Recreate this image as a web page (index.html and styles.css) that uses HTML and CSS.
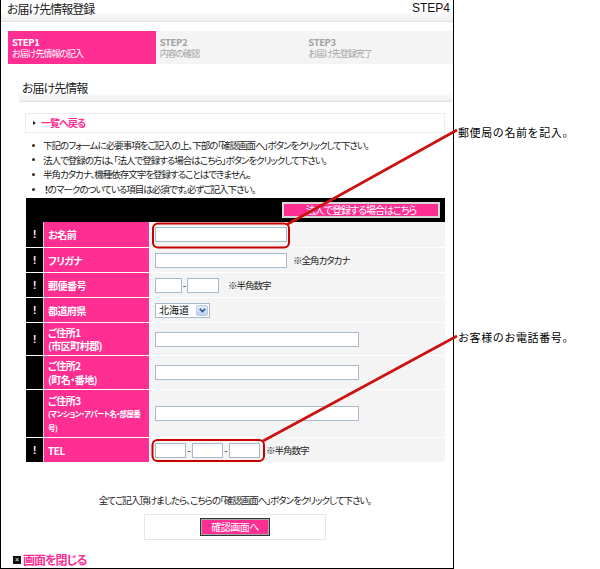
FILE: index.html
```html
<!DOCTYPE html>
<html lang="ja">
<head>
<meta charset="utf-8">
<title>お届け先情報登録</title>
<link rel="stylesheet" href="styles.css">
</head>
<body>
<div class="page">
  <div class="frame">
    <header class="titlebar">
      <h1>お届け先情報登録</h1>
      <span class="step4">STEP4</span>
    </header>

    <ol class="steps">
      <li class="step active"><b>STEP1</b><span>お届け先情報の記入</span></li>
      <li class="step"><b>STEP2</b><span>内容の確認</span></li>
      <li class="step"><b>STEP3</b><span>お届け先登録完了</span></li>
    </ol>

    <section class="content">
      <h2>お届け先情報</h2>
      <div class="body">
        <div class="backbox"><span class="tri"></span><a class="back">一覧へ戻る</a></div>
        <ul class="notes">
          <li>下記のフォームに必要事項をご記入の上、下部の「確認画面へ」ボタンをクリックして下さい。</li>
          <li>法人で登録の方は、「法人で登録する場合はこちら」ボタンをクリックして下さい。</li>
          <li>半角カタカナ、機種依存文字を登録することはできません。</li>
          <li><b class="bang">！</b>のマークのついている項目は必須です。必ずご記入下さい。</li>
        </ul>

        <div class="formhead"><button class="corp">法人で登録する場合はこちら</button></div>

        <div class="form">
          <div class="row h26">
            <div class="mark">!</div><div class="label">お名前</div>
            <div class="value"><input class="w132" type="text"></div>
          </div>
          <div class="row h25">
            <div class="mark">!</div><div class="label">フリガナ</div>
            <div class="value"><input class="w132" type="text"><span class="hint h6">※全角カタカナ</span></div>
          </div>
          <div class="row h25">
            <div class="mark">!</div><div class="label">郵便番号</div>
            <div class="value"><input class="w27" type="text"><span class="dash d5">-</span><input class="w32" type="text"><span class="hint h9">※半角数字</span></div>
          </div>
          <div class="row h25">
            <div class="mark">!</div><div class="label">都道府県</div>
            <div class="value">
              <span class="select"><span class="select-val">北海道</span><span class="select-btn"><svg width="7" height="5" viewBox="0 0 7 5"><path d="M0.8 0.8 L3.5 3.6 L6.2 0.8" fill="none" stroke="#2b4f8a" stroke-width="1.5"/></svg></span></span>
            </div>
          </div>
          <div class="row h33">
            <div class="mark">!</div><div class="label"><span>ご住所1</span><span>(市区町村郡)</span></div>
            <div class="value"><input class="w204" type="text"></div>
          </div>
          <div class="row h34">
            <div class="mark"></div><div class="label"><span>ご住所2</span><span>(町名・番地)</span></div>
            <div class="value"><input class="w204" type="text"></div>
          </div>
          <div class="row h48">
            <div class="mark"></div><div class="label"><span>ご住所3</span><small>(マンション・アパート名・部屋番</small><small>号)</small></div>
            <div class="value"><input class="w204" type="text"></div>
          </div>
          <div class="row h25">
            <div class="mark">!</div><div class="label">TEL</div>
            <div class="value"><input class="w31" type="text"><span class="dash d6">-</span><input class="w31" type="text"><span class="dash d6">-</span><input class="w31" type="text"><span class="hint h6">※半角数字</span></div>
          </div>
        </div>

        <p class="confirm-note">全てご記入頂けましたら、こちらの「確認画面へ」ボタンをクリックして下さい。</p>
        <div class="confirm-box"><button class="confirm">確認画面へ</button></div>
      </div>
    </section>

    <div class="close"><span class="close-icon">×</span><a class="close-link">画面を閉じる</a></div>
  </div>

  <svg class="overlay" width="600" height="569" viewBox="0 0 600 569">
    <rect x="153" y="223.5" width="136" height="24" rx="5" fill="none" stroke="#c80000" stroke-width="2"/>
    <rect x="152.5" y="440" width="111.5" height="21" rx="5" fill="none" stroke="#c80000" stroke-width="2"/>
    <line x1="287" y1="224.5" x2="457" y2="130" stroke="#cc1111" stroke-width="2.6"/>
    <line x1="263" y1="441" x2="457" y2="336" stroke="#cc1111" stroke-width="2.6"/>
  </svg>
  <div class="annot a1">郵便局の名前を記入。</div>
  <div class="annot a2">お客様のお電話番号。</div>
</div>
</body>
</html>
```
FILE: styles.css
```css
* { box-sizing: border-box; margin: 0; padding: 0; }

body {
  margin: 0;
  background: #fff;
  color: #222;
  font-family: "Noto Sans CJK JP", "Noto Sans", sans-serif;
  font-size: 10px;
  font-feature-settings: "palt";
  letter-spacing: -1px;
}

.page { position: relative; width: 600px; height: 569px; }

.frame {
  width: 454px;
  height: 569px;
  border-left: 1px solid #000;
  border-right: 1px solid #000;
  border-bottom: 1px solid #000;
}

/* title */
.titlebar {
  height: 22px;
  display: flex;
  justify-content: space-between;
  align-items: flex-start;
  padding: 2px 3px 0 6px;
  background: linear-gradient(#fff 0, #fff 13px, #fbfbfb 13px, #efefef 21px);
  border-bottom: 1px solid #e2e2e2;
}
.titlebar h1 { font-size: 12px; font-weight: normal; line-height: 13px; color: #222; }
.step4 { font-family: "Liberation Sans", Arial, sans-serif; font-size: 12px; line-height: 13px; color: #111; letter-spacing: 0; }

/* steps */
.steps {
  display: flex;
  list-style: none;
  margin: 9px 0 0 7px;
  height: 33px;
  background: #f4f4f4;
}
.step { width: 150px; padding: 5px 4px 0; color: #a3a3a3; font-size: 9px; }
.step b { display: block; font-size: 9.5px; line-height: 12px; letter-spacing: -0.4px; }
.step span { display: block; line-height: 12px; }
.step.active { width: 149px; background: #ff2e93; color: #fff; }

/* content */
.content { padding: 0 1px 0 18px; }
.content h2 {
  margin-top: 18px;
  height: 20px;
  padding-left: 3px;
  font-size: 12px;
  font-weight: normal;
  line-height: 12px;
  color: #222;
  background: linear-gradient(#fff 0, #fff 12px, #fafafa 12px, #f0f0f0 19px);
  border-bottom: 1px solid #e2e2e2;
}
.body { margin: 0 7px 0 6px; }

.backbox {
  margin-top: 11px;
  height: 20px;
  border: 1px solid #ececec;
  display: flex;
  align-items: center;
  padding-left: 7px;
}
.tri {
  width: 0; height: 0;
  border-left: 3px solid #222;
  border-top: 2px solid transparent;
  border-bottom: 2px solid transparent;
  margin-right: 5px;
}
.back { color: #ff2e93; font-weight: bold; font-size: 10px; line-height: 12px; }

.notes { list-style: none; margin-top: 5px; }
.notes li { display: flex; align-items: center; line-height: 14.6px; font-size: 9.5px; }
.notes li::before {
  content: "";
  width: 3px; height: 3px;
  border-radius: 50%;
  background: #3a2a1a;
  margin: 0 8px 0 7px;
  flex: none;
}
.bang { font-weight: bold; margin-left: 1px; }

/* black bar */
.formhead {
  margin: 2px 0 0 1px;
  height: 24px;
  background: #000;
  display: flex;
  justify-content: flex-end;
  align-items: center;
  padding-right: 5px;
}
.corp {
  width: 158px;
  height: 16px;
  background: #ff2e93;
  border: 2px solid #d8d8d8;
  color: #fff;
  font-family: inherit;
  font-size: 10px;
  line-height: 12px;
  letter-spacing: -1px;
  font-feature-settings: "palt";
}

/* form rows */
.form { margin-left: 1px; }
.row {
  display: grid;
  grid-template-columns: 18px 106px 1fr;
  border-bottom: 1px solid #fff;
}
.h25 { height: 25px; }
.h26 { height: 26px; }
.h33 { height: 33px; }
.h34 { height: 34px; }
.h48 { height: 48px; }

.mark {
  background: #000;
  border-right: 1px solid #d0d0d0;
  color: #fff;
  font-weight: bold;
  font-family: "Liberation Sans", sans-serif;
  font-size: 10px;
  letter-spacing: 0;
  display: flex;
  align-items: center;
  padding-left: 7px;
}
.label {
  background: #ff2e93;
  border-right: 1px solid #fff;
  color: #fff;
  font-weight: bold;
  font-size: 10px;
  line-height: 13.5px;
  letter-spacing: -0.5px;
  display: flex;
  flex-direction: column;
  justify-content: center;
  padding-left: 4px;
  white-space: nowrap;
}
.label small { font-size: 7.5px; line-height: 13.5px; letter-spacing: -0.6px; }
.value {
  background: #f4f4f4;
  display: flex;
  align-items: center;
  padding-left: 5px;
}
input {
  height: 15px;
  border: 1px solid #a9b9cc;
  background: #fff;
  font-size: 10px;
}
.w27 { width: 27px; }
.w31 { width: 31px; }
.w32 { width: 32px; }
.w132 { width: 132px; }
.w204 { width: 204px; }
.dash { text-align: center; font-size: 10px; color: #333; line-height: 10px; letter-spacing: 0; }
.d5 { width: 5px; }
.d6 { width: 6px; }
.hint { font-size: 9.5px; color: #222; }
.h6 { margin-left: 6px; }
.h9 { margin-left: 9px; }

.select {
  width: 55px;
  height: 15px;
  border: 1px solid #a9b9cc;
  background: #fff;
  display: flex;
  align-items: center;
  justify-content: space-between;
  padding: 0 1px 0 3px;
}
.select-val { font-size: 10px; line-height: 12px; color: #111; letter-spacing: 0; }
.select-btn {
  width: 12px;
  height: 11px;
  border: 1px solid #b9cbe6;
  border-radius: 2px;
  background: linear-gradient(#e3ecfa, #bdd0ee);
  display: flex;
  align-items: center;
  justify-content: center;
}

/* confirm */
.confirm-note {
  margin-top: 30px;
  text-align: center;
  font-size: 9.5px;
  line-height: 14px;
}
.confirm-box {
  margin: 7px auto 0;
  width: 182px;
  height: 26px;
  border: 1px solid #e6e6e6;
  display: flex;
  justify-content: center;
  align-items: center;
}
.confirm {
  width: 70px;
  height: 18px;
  background: #ff2e93;
  border: 1px solid #333;
  box-shadow: inset 0 0 0 1px #a8a8a8;
  color: #fff;
  font-family: inherit;
  font-size: 10px;
  line-height: 12px;
  letter-spacing: -0.5px;
  font-feature-settings: "palt";
}

/* close */
.close {
  margin-top: 13px;
  padding-left: 12px;
  display: flex;
  align-items: center;
  height: 14px;
}
.close-icon {
  width: 8px;
  height: 8px;
  background: #111;
  color: #fff;
  font-family: "Liberation Sans", sans-serif;
  font-size: 7px;
  line-height: 8px;
  letter-spacing: 0;
  text-align: center;
  margin-right: 2px;
}
.close-link { color: #ff2e93; font-weight: bold; font-size: 12px; line-height: 14px; }

/* annotations overlay */
.overlay { position: absolute; left: 0; top: 0; pointer-events: none; }
.annot {
  position: absolute;
  left: 458px;
  font-size: 11px;
  line-height: 12px;
  color: #000;
  letter-spacing: 0.6px;
  font-feature-settings: normal;
}
.a1 { top: 126px; }
.a2 { top: 331px; }
```
